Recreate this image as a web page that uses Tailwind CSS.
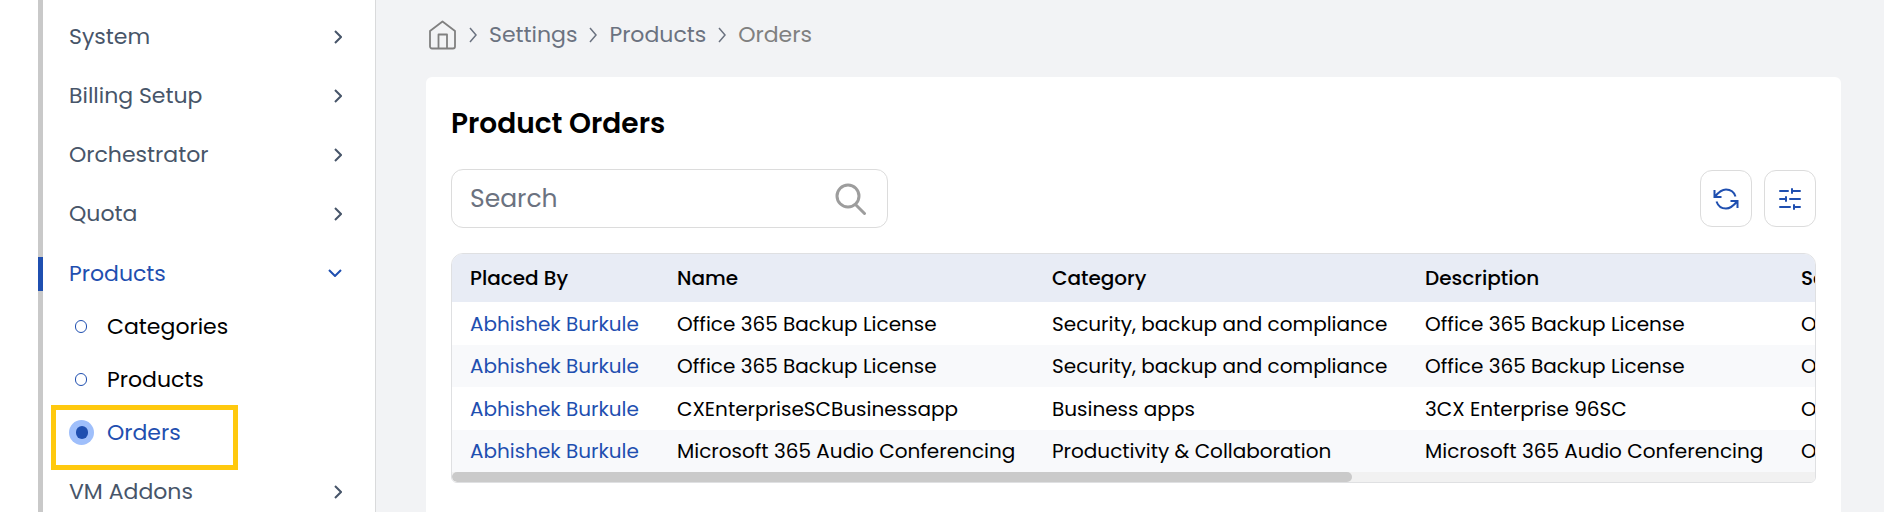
<!DOCTYPE html>
<html lang="en">
<head>
<meta charset="utf-8">
<meta name="viewport" content="width=device-width, initial-scale=1">
<title>Product Orders</title>
<script src="https://cdn.jsdelivr.net/npm/@tailwindcss/browser@4"></script>
</head>
<body class="flex min-h-screen overflow-hidden bg-white font-[Poppins,Inter,sans-serif] text-black">
<svg class="hidden">
  <symbol id="right" viewBox="0 0 8 14"><path d="M1 1l6 6-6 6" fill="none" stroke="currentColor" stroke-width="2"/></symbol>
  <symbol id="crumb" viewBox="0 0 8 16"><path d="M1 1l6 7-6 7" fill="none" stroke="currentColor" stroke-width="1.5"/></symbol>
</svg>

<aside class="ml-[38px] flex w-[338px] shrink-0 border-r border-[#d9dadb]">
  <div class="w-[5px] shrink-0 bg-[#c9c9c9] pt-[257px]"><div class="h-[34px] bg-[#1f4fb0]"></div></div>
  <nav class="flex h-[512px] flex-1 flex-col overflow-hidden pt-[7px] pr-[33px] pl-[26px] text-[22px] text-[#475569]">
    <a href="#" class="flex h-[59px] shrink-0 items-center justify-between"><span>System</span><svg class="h-[14px] w-2"><use href="#right"/></svg></a>
    <a href="#" class="flex h-[59px] shrink-0 items-center justify-between"><span>Billing Setup</span><svg class="h-[14px] w-2"><use href="#right"/></svg></a>
    <a href="#" class="flex h-[59px] shrink-0 items-center justify-between"><span>Orchestrator</span><svg class="h-[14px] w-2"><use href="#right"/></svg></a>
    <a href="#" class="flex h-[59px] shrink-0 items-center justify-between"><span>Quota</span><svg class="h-[14px] w-2"><use href="#right"/></svg></a>
    <a href="#" class="flex h-[60px] shrink-0 items-center justify-between text-[#1f4fb0]"><span>Products</span><svg class="h-2 w-[14px]" viewBox="0 0 14 8"><path d="M1 1l6 6 6-6" fill="none" stroke="currentColor" stroke-width="2"/></svg></a>
    <ul class="-mt-[3px] shrink-0 text-black">
      <li><a href="#" class="flex h-[53px] items-center"><span class="ml-[6px] mr-5 h-[13px] w-3 rounded-full border border-[#1f4fb0]"></span>Categories</a></li>
      <li><a href="#" class="flex h-[53px] items-center"><span class="ml-[6px] mr-5 h-[13px] w-3 rounded-full border border-[#1f4fb0]"></span>Products</a></li>
      <li class="relative"><a href="#" aria-current="page" class="flex h-[53px] items-center text-[#1f4fb0]"><span class="mr-[13px] flex size-[25px] items-center justify-center rounded-full bg-[#9fbffb]"><span class="h-[13px] w-3 rounded-full bg-[#1f4fb0]"></span></span>Orders</a>
        <div class="pointer-events-none absolute -left-[18px] -top-[1px] h-[65px] w-[187px] border-5 border-[#ffc90e]"></div></li>
    </ul>
    <a href="#" class="mt-[3px] flex h-[59px] shrink-0 items-center justify-between"><span>VM Addons</span><svg class="h-[14px] w-2"><use href="#right"/></svg></a>
  </nav>
</aside>

<main class="flex min-w-0 flex-1 flex-col bg-[#f2f3f5] pr-[43px] pl-[50px]">
  <nav aria-label="Breadcrumb" class="flex h-[77px] items-center gap-3 pb-2 pl-[3px] text-[22px] text-[#6b7280]">
    <a href="#" aria-label="Home" class="mr-[1px] text-[#808080]"><svg class="h-[30px] w-[27px]" viewBox="0 0 27 30" fill="none" stroke="currentColor" stroke-width="1.8" stroke-linejoin="round"><path d="M1 11L13.500 1.500 26 11V26.500a2 2 0 0 1-2 2H3a2 2 0 0 1-2-2zM9.500 28.500V14.500h8.500v14"/></svg></a>
    <svg class="h-4 w-2"><use href="#crumb"/></svg>
    <a href="#">Settings</a>
    <svg class="h-4 w-2"><use href="#crumb"/></svg>
    <a href="#">Products</a>
    <svg class="h-4 w-2"><use href="#crumb"/></svg>
    <span class="text-[#808080]">Orders</span>
  </nav>

  <section class="flex-1 rounded-t-md bg-white px-[25px] pt-[27px]">
    <h1 class="text-[28px] leading-10 font-semibold">Product Orders</h1>
    <div class="mt-[25px] flex items-center justify-between">
      <div class="flex h-[59px] w-[437px] items-center rounded-xl border border-[#dcdcdc] pr-[20px] pl-[18px]">
        <input type="search" aria-label="Search" placeholder="Search" class="min-w-0 flex-1 text-[25px] outline-none placeholder:text-[#6b7280]">
        <svg class="size-8" viewBox="0 0 32 32" fill="none" stroke="#9d9d9d" stroke-width="3" stroke-linecap="round"><circle cx="13" cy="13" r="11"/><path d="M21 22l8.500 8.500"/></svg>
      </div>
      <div class="flex gap-3">
        <button aria-label="Refresh" class="flex h-[57px] w-[52px] items-center justify-center rounded-xl border border-[#dcdcdc] text-[#1f4fb0]"><svg class="h-[22px] w-[26px]" viewBox="0 0 26 22" fill="none" stroke="currentColor" stroke-width="2"><path d="M22.500 8.500C21 4 17 1.500 13 1.500S6.500 3 2 8.500M1.500 2v7h7M3.500 13.500C5 18 9 20.500 13 20.500S19.500 19 24 13.500M24.500 20v-7h-7"/></svg></button>
        <button aria-label="Filter" class="flex h-[57px] w-[52px] items-center justify-center rounded-xl border border-[#dcdcdc] text-[#1f4fb0]"><svg class="h-6 w-[22px]" viewBox="0 0 22 24" fill="none" stroke="currentColor" stroke-width="2" stroke-linecap="round"><path d="M1 4h8M13 4h8M13 2v4M1 12h6M7 10v4M11 12h10M1 20h10M15 20h6M15 18v4"/></svg></button>
      </div>
    </div>

    <div class="mt-[25px] overflow-hidden rounded-t-xl rounded-b-md border border-[#dfe0e2]">
      <div class="overflow-hidden">
        <table class="w-[2064px] table-fixed text-left text-[20px] leading-[30px]">
          <colgroup><col class="w-[206px]"><col class="w-[376px]"><col class="w-[373px]"><col class="w-[376px]"><col></colgroup>
          <thead class="bg-[#e8ecf5]"><tr class="h-12">
            <th class="pl-[18px] font-medium">Placed By</th><th class="pl-[19px] font-medium">Name</th><th class="pl-[18px] font-medium">Category</th><th class="pl-[18px] font-medium">Description</th><th class="pl-[18px] font-medium">Service</th></tr></thead>
          <tbody class="whitespace-nowrap">
            <tr class="h-[43px]"><td class="pl-[18px]"><a href="#" class="text-[#1f4fb0]">Abhishek Burkule</a></td><td class="pl-[19px]">Office 365 Backup License</td><td class="pl-[18px]">Security, backup and compliance</td><td class="pl-[18px]">Office 365 Backup License</td><td class="pl-[18px]">O</td></tr>
            <tr class="h-[42px] bg-[#f8f9fb]"><td class="pl-[18px]"><a href="#" class="text-[#1f4fb0]">Abhishek Burkule</a></td><td class="pl-[19px]">Office 365 Backup License</td><td class="pl-[18px]">Security, backup and compliance</td><td class="pl-[18px]">Office 365 Backup License</td><td class="pl-[18px]">O</td></tr>
            <tr class="h-[43px]"><td class="pl-[18px]"><a href="#" class="text-[#1f4fb0]">Abhishek Burkule</a></td><td class="pl-[19px]">CXEnterpriseSCBusinessapp</td><td class="pl-[18px]">Business apps</td><td class="pl-[18px]">3CX Enterprise 96SC</td><td class="pl-[18px]">O</td></tr>
            <tr class="h-[42px] bg-[#f8f9fb]"><td class="pl-[18px]"><a href="#" class="text-[#1f4fb0]">Abhishek Burkule</a></td><td class="pl-[19px]">Microsoft 365 Audio Conferencing</td><td class="pl-[18px]">Productivity &amp; Collaboration</td><td class="pl-[18px]">Microsoft 365 Audio Conferencing</td><td class="pl-[18px]">O</td></tr>
          </tbody>
        </table>
      </div>
      <div class="h-[10px] bg-[#f1f1f1]"><div class="h-full w-[66%] rounded-full bg-[#cacaca]"></div></div>
    </div>
  </section>
</main>
</body>
</html>
